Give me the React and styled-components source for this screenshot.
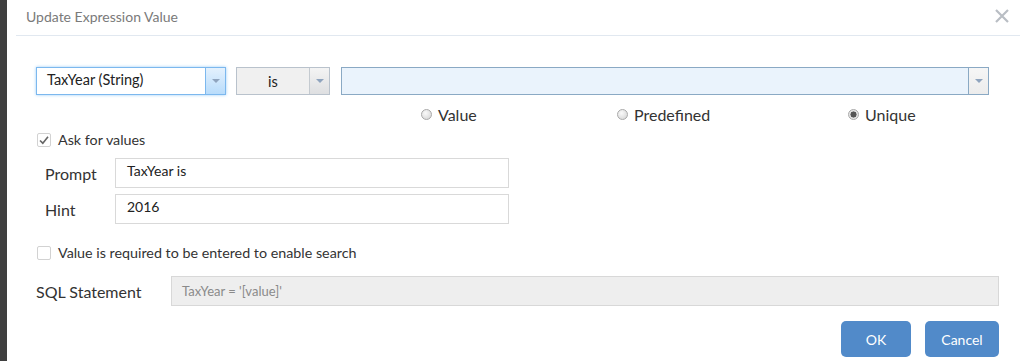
import styled, { createGlobalStyle } from "styled-components";

const GlobalStyle = createGlobalStyle`
  html, body {
    margin: 0;
    padding: 0;
    background: #ffffff;
  }
  body {
    font-family: "Lato", "Liberation Sans", sans-serif;
    color: #333333;
  }
`;

const Arrow = () => (
  <svg width="8" height="5" viewBox="0 0 8 5">
    <path d="M0 0 L8 0 L4 4 Z" fill="#8fa4be" />
  </svg>
);

const CheckMark = () => (
  <svg width="12" height="12" viewBox="0 0 12 12">
    <path d="M2 6.5 L4.8 9.2 L10 2.8" fill="none" stroke="#666" strokeWidth="1.6" />
  </svg>
);

const CloseIcon = () => (
  <svg width="14" height="14" viewBox="0 0 14 14">
    <path d="M1 1 L13 13 M13 1 L1 13" stroke="#b9bec4" strokeWidth="2.2" />
  </svg>
);

const App = () => {
  const radios = [
    { label: "Value", checked: false },
    { label: "Predefined", checked: false },
    { label: "Unique", checked: true },
  ];

  return (
    <>
      <GlobalStyle />
      <Page>
        <Strip />
        <Dialog>
          <Header>
            <Title>Update Expression Value</Title>
            <CloseButton>
              <CloseIcon />
            </CloseButton>
          </Header>
          <Body>
            <SelectRow>
              <Select $width={190} $variant="focus">
                <SelectText>TaxYear (String)</SelectText>
                <ArrowBox $variant="focus">
                  <Arrow />
                </ArrowBox>
              </Select>
              <Select $width={94} $variant="gray">
                <SelectText $center>is</SelectText>
                <ArrowBox $variant="gray">
                  <Arrow />
                </ArrowBox>
              </Select>
              <Select $grow $variant="blue">
                <SelectText />
                <ArrowBox $variant="blue">
                  <Arrow />
                </ArrowBox>
              </Select>
            </SelectRow>

            <RadioRow>
              {radios.map(r => (
                <RadioItem key={r.label}>
                  <RadioDot $checked={r.checked} />
                  <span>{r.label}</span>
                </RadioItem>
              ))}
            </RadioRow>

            <CheckRow $top={8}>
              <CheckBox>
                <CheckMark />
              </CheckBox>
              <span>Ask for values</span>
            </CheckRow>

            <FieldGrid>
              <FieldLabel>Prompt</FieldLabel>
              <TextBox>TaxYear is</TextBox>
              <FieldLabel>Hint</FieldLabel>
              <TextBox>2016</TextBox>
            </FieldGrid>

            <CheckRow $top={20}>
              <CheckBox />
              <span>Value is required to be entered to enable search</span>
            </CheckRow>

            <SqlRow>
              <SqlLabel>SQL Statement</SqlLabel>
              <SqlBox>TaxYear = '[value]'</SqlBox>
            </SqlRow>

            <Footer>
              <Button $width={70}>OK</Button>
              <Button $width={74}>Cancel</Button>
            </Footer>
          </Body>
        </Dialog>
      </Page>
    </>
  );
};

export default App;

/* ---------------------------- Styled Components --------------------------- */

const Page = styled.div`
  display: flex;
  height: 361px;
  overflow: hidden;
`;

const Strip = styled.div`
  width: 7px;
  flex-shrink: 0;
  background: #3f3f3f;
`;

const Dialog = styled.div`
  flex: 1;
  display: flex;
  flex-direction: column;
  background: #fff;
`;

const Header = styled.div`
  height: 36px;
  margin: 0 4px 0 9px;
  padding: 0 6px 0 10px;
  border-bottom: 1px solid #e1e8f0;
  display: flex;
  align-items: center;
  justify-content: space-between;
  box-sizing: border-box;
`;

const Title = styled.div`
  font-size: 14px;
  color: #7a7a7a;
  margin-top: -2px;
`;

const CloseButton = styled.div`
  display: flex;
  margin-right: 5px;
  margin-top: -4px;
`;

const Body = styled.div`
  padding: 31px 25px 0 29px;
  display: flex;
  flex-direction: column;
`;

const SelectRow = styled.div`
  display: flex;
  gap: 10px;
  padding-right: 10px;
`;

const selectStyles = {
  focus: { bg: "#ffffff", border: "#7cb8ee", shadow: "0 0 3px #9ccdf7" },
  gray: { bg: "#f0f0f0", border: "#b9c2cc", shadow: "none" },
  blue: { bg: "#eaf3fc", border: "#8aa9c4", shadow: "none" },
};

const Select = styled.div`
  display: flex;
  height: 28px;
  box-sizing: border-box;
  width: ${p => (p.$grow ? "auto" : `${p.$width}px`)};
  flex: ${p => (p.$grow ? 1 : "none")};
  margin-left: ${p => (p.$grow ? "1px" : "0")};
  background: ${p => selectStyles[p.$variant].bg};
  border: 1px solid ${p => selectStyles[p.$variant].border};
  box-shadow: ${p => selectStyles[p.$variant].shadow};
`;

const SelectText = styled.div`
  flex: 1;
  font-size: 14.5px;
  color: #222;
  display: flex;
  align-items: center;
  justify-content: ${p => (p.$center ? "center" : "flex-start")};
  padding-left: ${p => (p.$center ? "0" : "10px")};
  padding-bottom: ${p => (p.$center ? "0" : "3px")};
`;

const arrowBg = {
  focus: "linear-gradient(#e4f1fd, #b8dcfb)",
  gray: "linear-gradient(#f4f4f4, #dedfe1)",
  blue: "linear-gradient(#f6f6f6, #ececec)",
};

const ArrowBox = styled.div`
  width: 19px;
  display: flex;
  align-items: center;
  justify-content: center;
  border-left: 1px solid
    ${p => (p.$variant === "blue" ? "#8aa9c4" : p.$variant === "gray" ? "#c4cad0" : "#7cb8ee")};
  background: ${p => arrowBg[p.$variant]};
`;

const RadioRow = styled.div`
  display: grid;
  grid-template-columns: 196px 231px auto;
  padding-left: 385px;
  margin-top: 10px;
`;

const RadioItem = styled.div`
  display: flex;
  align-items: center;
  gap: 6px;
  font-size: 16px;
  color: #333;
  height: 18px;
`;

const RadioDot = styled.span`
  width: 11px;
  height: 11px;
  border-radius: 50%;
  box-sizing: border-box;
  border: 1px solid #a9a9a9;
  background: ${p =>
    p.$checked
      ? "radial-gradient(circle, #555 0 2.8px, #e4e4e4 3.3px)"
      : "radial-gradient(circle at 40% 35%, #fafafa, #d2d2d2)"};
`;

const CheckRow = styled.label`
  display: flex;
  align-items: center;
  gap: 7px;
  font-size: 14.3px;
  color: #333;
  margin-top: ${p => p.$top}px;
  margin-left: 1px;
`;

const CheckBox = styled.span`
  width: 14px;
  height: 14px;
  box-sizing: border-box;
  border: 1px solid #d2d2d2;
  border-radius: 2px;
  display: flex;
  align-items: center;
  justify-content: center;
  background: #fff;
`;

const FieldGrid = styled.div`
  display: grid;
  grid-template-columns: 79px 394px;
  row-gap: 6px;
  margin-top: 10px;
  align-items: center;
`;

const FieldLabel = styled.div`
  font-size: 16px;
  color: #333;
  padding-left: 9px;
`;

const TextBox = styled.div`
  height: 30px;
  box-sizing: border-box;
  border: 1px solid #d9d9d9;
  font-size: 14px;
  color: #222;
  padding: 3px 0 0 11px;
`;

const SqlRow = styled.div`
  display: grid;
  grid-template-columns: 135px 1fr;
  align-items: center;
  margin-top: 15px;
`;

const SqlLabel = styled.div`
  font-size: 16px;
  color: #333;
`;

const SqlBox = styled.div`
  height: 30px;
  box-sizing: border-box;
  background: #eeeeee;
  border: 1px solid #d8d8d8;
  font-size: 13px;
  color: #8a8a8a;
  display: flex;
  align-items: center;
  padding: 0 0 1px 10px;
`;

const Footer = styled.div`
  display: flex;
  justify-content: flex-end;
  gap: 14px;
  margin-top: 15px;
`;

const Button = styled.button`
  width: ${p => p.$width}px;
  height: 36px;
  border: none;
  border-radius: 5px;
  background: #518ac9;
  color: #ffffff;
  font-family: inherit;
  font-size: 14px;
  cursor: pointer;
`;
